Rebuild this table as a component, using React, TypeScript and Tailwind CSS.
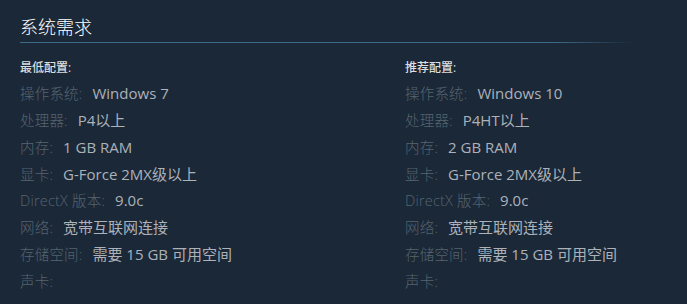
import React from "react";

const font = { fontFamily: '"Open Sans", "Noto Sans CJK SC", sans-serif' };

type Row = [string, string];

const minReq: Row[] = [
  ["操作系统:", "Windows 7"],
  ["处理器:", "P4以上"],
  ["内存:", "1 GB RAM"],
  ["显卡:", "G-Force 2MX级以上"],
  ["DirectX 版本:", "9.0c"],
  ["网络:", "宽带互联网连接"],
  ["存储空间:", "需要 15 GB 可用空间"],
  ["声卡:", ""],
];

const recReq: Row[] = [
  ["操作系统:", "Windows 10"],
  ["处理器:", "P4HT以上"],
  ["内存:", "2 GB RAM"],
  ["显卡:", "G-Force 2MX级以上"],
  ["DirectX 版本:", "9.0c"],
  ["网络:", "宽带互联网连接"],
  ["存储空间:", "需要 15 GB 可用空间"],
  ["声卡:", ""],
];

function Col({ title, rows }: { title: string; rows: Row[] }) {
  return (
    <div>
      <div className="text-[12px] leading-[16px] text-[#dcdedf] font-medium">{title}</div>
      <ul className="mt-[4px]">
        {rows.map(([k, v]) => (
          <li key={k} className="h-[26.86px] leading-[26.86px] whitespace-nowrap">
            <span className="text-[14.5px] leading-[26.86px] text-[#56646f] font-light tracking-[0.2px]">{k}</span>
            {v && (
              <span className="ml-[10px] text-[15px] leading-[26.86px] text-[#acb2b8]">{v}</span>
            )}
          </li>
        ))}
      </ul>
    </div>
  );
}

export default function App() {
  return (
    <div className="w-[687px] h-[304px] bg-[#1b2838] overflow-hidden" style={font}>
      <div className="pl-[20px] pt-[15px]">
        <h2 className="text-[18px] leading-[24px] text-white font-light">系统需求</h2>
        <div className="mt-[3px] h-px bg-[linear-gradient(to_right,#3e6a89_0%,#3e6a89_80%,#1b2838_92%)]" />
        <div className="grid grid-cols-[385px_1fr] mt-[17px]">
          <Col title="最低配置:" rows={minReq} />
          <Col title="推荐配置:" rows={recReq} />
        </div>
      </div>
    </div>
  );
}
